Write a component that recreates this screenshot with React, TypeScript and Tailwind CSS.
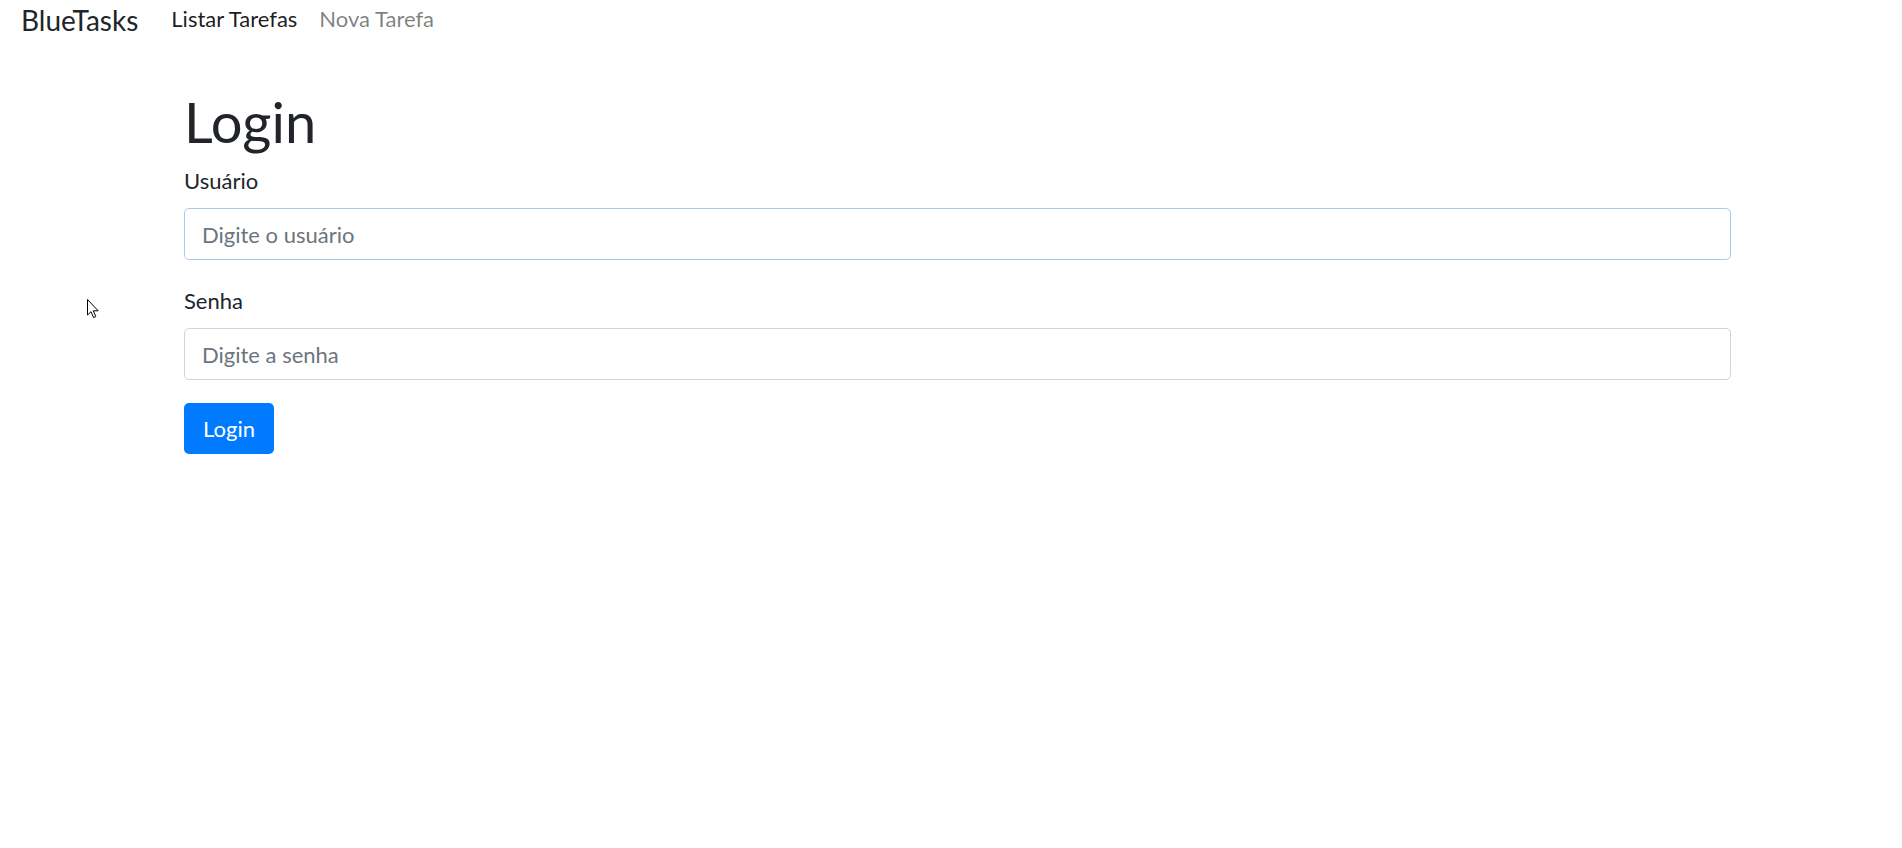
import React, { useState } from 'react';

const font = { fontFamily: 'Lato, "Open Sans", sans-serif' };

const Navbar: React.FC = () => (
  <nav className="flex items-start h-[40px] pl-[21px]">
    <span className="text-[28px] leading-[40px] text-[#212529] mr-[33px]">BlueTasks</span>
    <a href="#" className="pt-[2px] text-[22px] leading-[33px] text-black/90 mr-[22px]">
      Listar Tarefas
    </a>
    <a href="#" className="pt-[2px] text-[22px] leading-[33px] text-black/50">
      Nova Tarefa
    </a>
  </nav>
);

const Cursor: React.FC = () => (
  <svg className="absolute left-[87px] top-[299px]" width="13" height="20" viewBox="0 0 13 20">
    <path d="M0.5 0.5 L0.5 16 L4 12.7 L6.6 18.6 L8.8 17.6 L6.3 11.8 L11.2 11.8 Z" fill="#fff" stroke="#000" strokeWidth="1" strokeLinejoin="round" />
  </svg>
);

export default function App() {
  const [user, setUser] = useState('');
  const [password, setPassword] = useState('');

  return (
    <div className="relative min-h-[848px] bg-white text-[#212529]" style={font}>
      <Navbar />
      <Cursor />

      <main className="ml-[184px] w-[1547px]">
        <h1 className="mt-[49px] text-[56px] leading-[66px] font-normal">Login</h1>

        <form onSubmit={(e) => e.preventDefault()}>
          <div>
            <label className="block mt-[9px] text-[22px] leading-[33px]">Usuário</label>
            <input
              type="text"
              value={user}
              onChange={(e) => setUser(e.target.value)}
              placeholder="Digite o usuário"
              className="mt-[11px] block w-full h-[52px] px-[17px] text-[22px] rounded-[5px] border border-[#a9c9f3] placeholder-[#6c757d] outline-none"
            />
          </div>

          <div>
            <label className="block mt-[24px] text-[22px] leading-[33px]">Senha</label>
            <input
              type="password"
              value={password}
              onChange={(e) => setPassword(e.target.value)}
              placeholder="Digite a senha"
              className="mt-[11px] block w-full h-[52px] px-[17px] text-[22px] rounded-[5px] border border-[#ced4da] placeholder-[#6c757d] outline-none"
            />
          </div>

          <button
            type="submit"
            className="mt-[23px] w-[90px] h-[51px] bg-[#007bff] text-white text-[22px] rounded-[5px]"
          >
            Login
          </button>
        </form>
      </main>
    </div>
  );
}
